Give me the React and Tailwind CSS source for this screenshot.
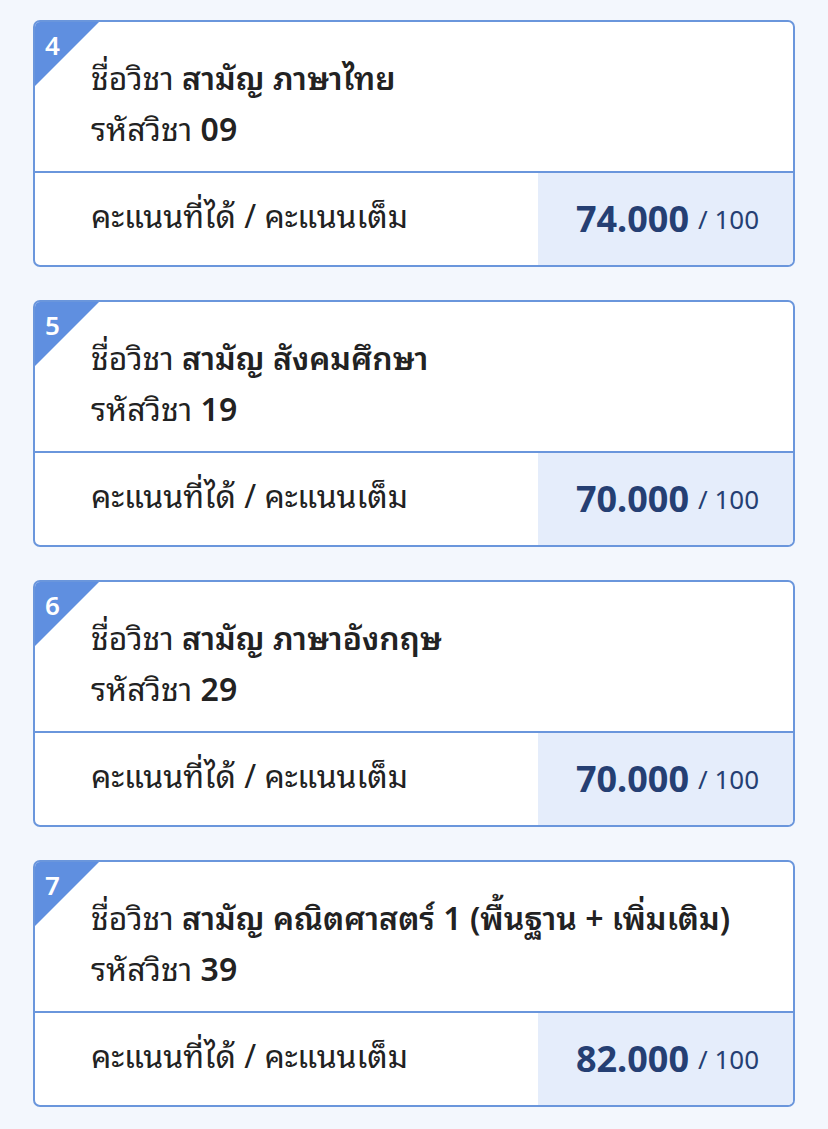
import React from "react";

const items = [
  { n: 4, name: "สามัญ ภาษาไทย", code: "09", score: "74.000" },
  { n: 5, name: "สามัญ สังคมศึกษา", code: "19", score: "70.000" },
  { n: 6, name: "สามัญ ภาษาอังกฤษ", code: "29", score: "70.000" },
  { n: 7, name: "สามัญ คณิตศาสตร์ 1 (พื้นฐาน + เพิ่มเติม)", code: "39", score: "82.000" },
];

function Card({ n, name, code, score }) {
  return (
    <div className="relative bg-white border-2 border-[#6a96dc] rounded-[7px] overflow-hidden">
      <div className="absolute left-0 top-0 w-[64px] h-[64px] bg-[#5f8fe0] [clip-path:polygon(0_0,100%_0,0_100%)]" />
      <div className="absolute left-[10px] top-[7px] text-white text-[26px] font-semibold leading-[32px]">{n}</div>
      <div className="pl-[56px] pt-[30px] pb-[17px] text-[32px] text-[#222]">
        <div className="h-[51px] flex items-center whitespace-nowrap">
          <span>ชื่อวิชา&nbsp;</span>
          <span className="font-semibold">{name}</span>
        </div>
        <div className="h-[51px] flex items-center whitespace-nowrap">
          <span>รหัสวิชา&nbsp;</span>
          <span className="font-semibold">{code}</span>
        </div>
      </div>
      <div className="flex border-t-2 border-[#6a96dc] h-[94px]">
        <div className="flex-1 pl-[56px] pb-[6px] flex items-center text-[32px] text-[#222]">
          คะแนนที่ได้ / คะแนนเต็ม
        </div>
        <div className="w-[255px] bg-[#e5edfb] flex items-center justify-center pl-[4px] text-[#253f73]">
          <span className="text-[36px] font-bold">{score}</span>
          <span className="text-[26px] ml-[9px]">/ 100</span>
        </div>
      </div>
    </div>
  );
}

export default function App() {
  return (
    <div className="min-h-[1129px] bg-[#f3f7fd] px-[33px] pt-[20px] flex flex-col gap-[33px] font-['Noto_Sans','Noto_Sans_Thai_Looped',sans-serif]">
      {items.map((it) => (
        <Card key={it.n} {...it} />
      ))}
    </div>
  );
}
